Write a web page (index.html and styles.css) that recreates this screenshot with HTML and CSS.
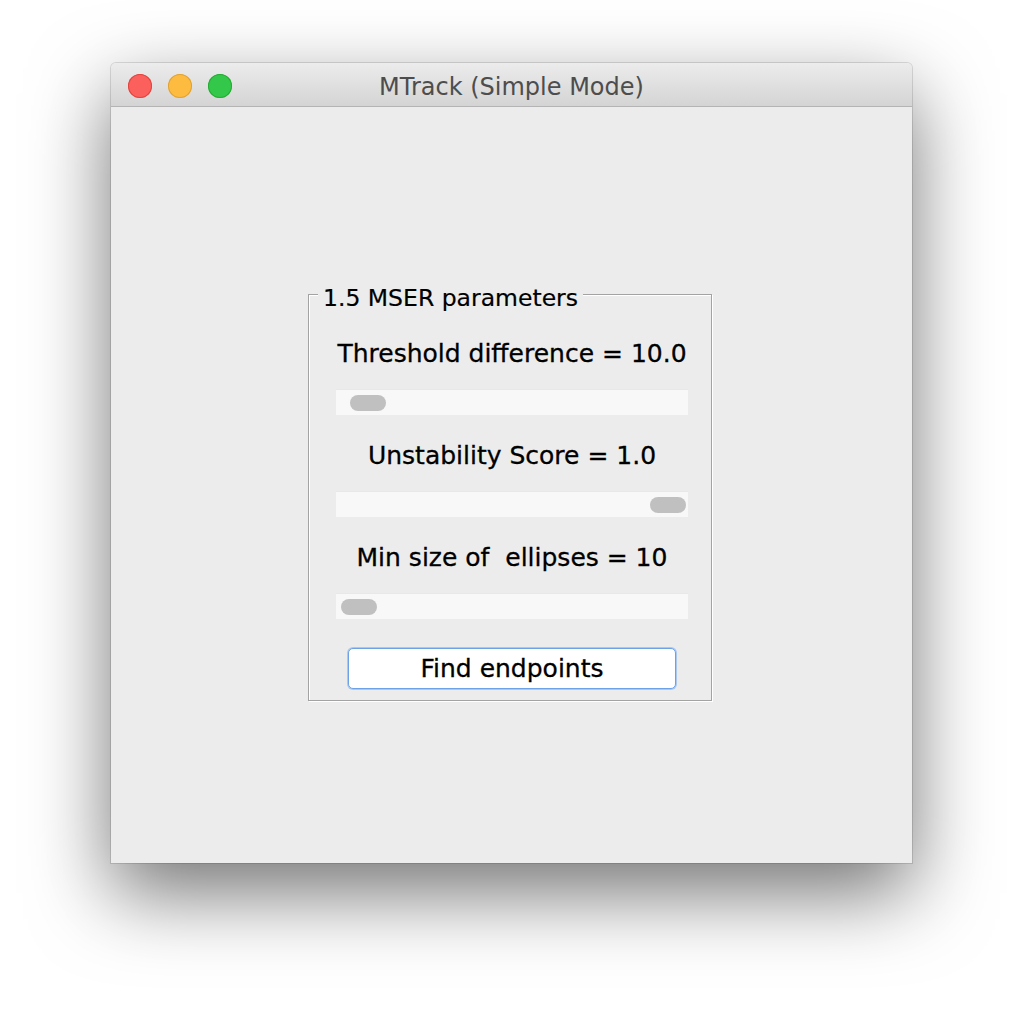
FILE: index.html
```html
<!DOCTYPE html>
<html lang="en">

<head>
    <meta charset="UTF-8">
    <title>MTrack (Simple Mode)</title>
    <link rel="stylesheet" href="styles.css">
</head>

<body>
    <div class="stage">
        <div class="window">
            <div class="titlebar">
                <div class="lights">
                    <span class="light red"></span>
                    <span class="light yellow"></span>
                    <span class="light green"></span>
                </div>
                <div class="title">MTrack (Simple Mode)</div>
            </div>
            <div class="content">
                <fieldset class="panel">
                    <legend>1.5 MSER parameters</legend>

                    <div class="label">Threshold difference = 10.0</div>
                    <div class="slider"><span class="thumb" style="margin-left: 14px;"></span></div>

                    <div class="label">Unstability Score = 1.0</div>
                    <div class="slider"><span class="thumb" style="margin-left: 314px;"></span></div>

                    <div class="label">Min size of &nbsp;ellipses = 10</div>
                    <div class="slider"><span class="thumb" style="margin-left: 5px;"></span></div>

                    <div class="actions">
                        <button class="btn">Find endpoints</button>
                    </div>
                </fieldset>
            </div>
        </div>
    </div>
</body>

</html>
```

FILE: styles.css
```css
* {
    box-sizing: border-box;
}

body {
    margin: 0;
    background: #ffffff;
    font-family: "DejaVu Sans", "Noto Sans", sans-serif;
}

.stage {
    width: 1024px;
    height: 1024px;
    padding: 63px 0 0 111px;
}

.window {
    width: 801px;
    height: 800px;
    background: #ececec;
    border-radius: 5px 5px 0 0;
    box-shadow: 0 0 0 1px rgba(0, 0, 0, 0.12), 0 30px 80px rgba(0, 0, 0, 0.55);
    display: flex;
    flex-direction: column;
    overflow: hidden;
}

.titlebar {
    height: 44px;
    flex: none;
    position: relative;
    display: flex;
    align-items: center;
    justify-content: center;
    background: linear-gradient(#ececec, #d4d4d4);
    border-bottom: 1px solid #b4b4b4;
}

.lights {
    position: absolute;
    left: 17px;
    top: 11px;
    display: flex;
    gap: 16px;
}

.light {
    width: 24px;
    height: 24px;
    border-radius: 50%;
}

.light.red {
    background: #fc605c;
    box-shadow: inset 0 0 0 1px #e0443e;
}

.light.yellow {
    background: #fdbc40;
    box-shadow: inset 0 0 0 1px #dea236;
}

.light.green {
    background: #34c84a;
    box-shadow: inset 0 0 0 1px #27aa35;
}

.title {
    font-size: 24px;
    color: #4d4d4d;
    margin-top: 5px;
}

.content {
    flex: 1;
    display: flex;
    justify-content: center;
    align-items: flex-start;
    padding: 170px 3px 0 0;
}

.panel {
    width: 404px;
    margin: 0;
    padding: 4px 23px 11px 27px;
    border: 1px solid #a3a3a3;
    box-shadow: inset 1px 1px 0 #ffffff, 1px 1px 0 #ffffff;
}

.panel legend {
    margin-left: -18px;
    padding: 8px 5px 0 5px;
    font-size: 23.5px;
    line-height: 26px;
    color: #000;
    background: #ececec;
    -webkit-text-stroke: 0.2px #000;
}

.label {
    margin-top: 19px;
    height: 40px;
    line-height: 40px;
    text-align: center;
    font-size: 25px;
    color: #000;
    white-space: nowrap;
    -webkit-text-stroke: 0.3px #000;
}

.slider + .label {
    margin-top: 21px;
}

.slider {
    margin-top: 15px;
    height: 26px;
    background: #f8f8f8;
    border-top: 1px solid #e8e8e8;
    display: flex;
    align-items: center;
}

.thumb {
    width: 36px;
    height: 16px;
    border-radius: 8px;
    background: #c0c0c0;
}

.actions {
    margin-top: 29px;
    display: flex;
    justify-content: center;
}

.btn {
    width: 328px;
    height: 41px;
    background: #ffffff;
    border: 1px solid #6ea2e8;
    box-shadow: 0 0 0 1px #a9c9f2;
    border-radius: 5px;
    font-family: inherit;
    font-size: 25px;
    color: #000;
    padding: 0;
    -webkit-text-stroke: 0.3px #000;
}
```
